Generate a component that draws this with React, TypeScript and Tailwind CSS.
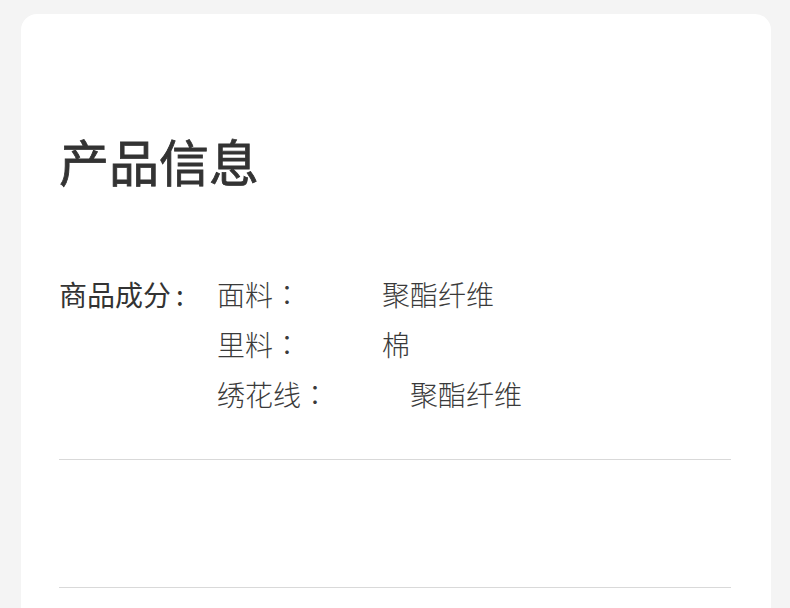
const ROWS = [
  { label: "面料", value: "聚酯纤维" },
  { label: "里料", value: "棉" },
  { label: "绣花线", value: "聚酯纤维" },
];

export default function App() {
  return (
    <div
      className="min-h-[608px] bg-[#f4f4f4] pt-[14px] pl-[21px]"
      style={{ fontFamily: '"Noto Sans CJK SC", "Noto Sans", sans-serif' }}
    >
      <div className="w-[750px] h-[620px] rounded-2xl bg-white pl-[38px] pr-[40px] pt-[121px]">
        <h1 className="text-[50px] leading-[50px] font-normal text-[#333] [-webkit-text-stroke:0.8px_#333]">
          产品信息
        </h1>
        <div className="mt-[84px] flex text-[28px] leading-[50px] text-[#333]">
          <div className="w-[158px] shrink-0">
            商品成分<span className="ml-[5px]">:</span>
          </div>
          <div className="flex flex-col font-light text-[#3a3a3a]">
            {ROWS.map((r) => (
              <div key={r.label} className="flex">
                <span>
                  {r.label}
                  <span style={{ fontFamily: '"Noto Sans CJK JP", sans-serif' }}>：</span>
                </span>
                <span className="ml-[81px]">{r.value}</span>
              </div>
            ))}
          </div>
        </div>
        <div className="mt-[40px] h-px bg-[#d9d9d9]" />
        <div className="mt-[127px] h-px bg-[#d9d9d9]" />
      </div>
    </div>
  );
}
